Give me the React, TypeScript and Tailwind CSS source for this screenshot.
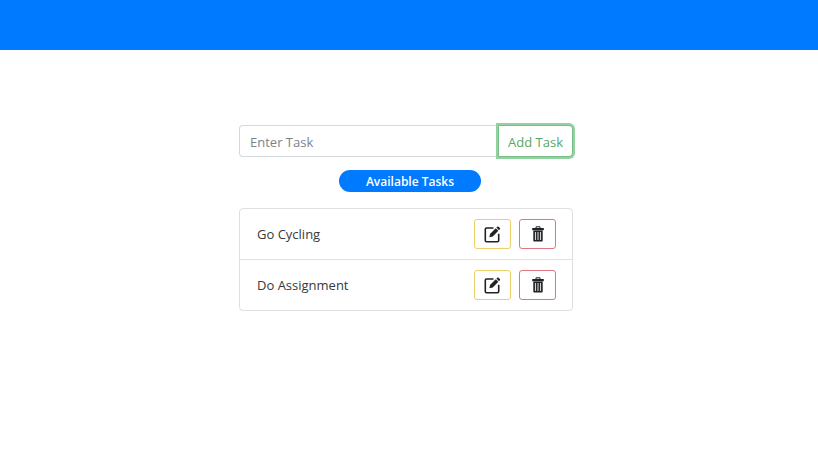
import React, { useState } from "react";

function EditIcon() {
  return (
    <svg viewBox="0 0 17 17" className="h-[17px] w-[17px]" fill="none" aria-hidden="true">
      <path
        d="M9.500 2H2.500C1.700 2 1.300 2.400 1.300 3.200v11.300c0 .8.4 1.200 1.200 1.200h11c.8 0 1.200-.4 1.200-1.200V7.800"
        stroke="#202326"
        strokeWidth="1.600"
      />
      <path d="M5.300 11.300l.9-3.500 5.600-5.600 2.600 2.600-5.600 5.600z" fill="#202326" />
      <path d="M12.400 1.600l.9-.9c.4-.4.8-.4 1.200 0L15.900 2.100c.4.4.4.8 0 1.200l-.9.9z" fill="#202326" />
    </svg>
  );
}

function TrashIcon() {
  return (
    <svg viewBox="0 0 12 16" className="h-4 w-3" fill="none" aria-hidden="true">
      <path d="M4 2V.8h4V2" stroke="#202326" strokeWidth="1" />
      <path d="M.2 2h11.600v2.200H.2z" fill="#202326" />
      <path d="M1.300 5h9.400v9.500c0 .6-.4 1-1 1H2.300c-.6 0-1-.4-1-1z" fill="#202326" />
      <path d="M1.300 4.200h9.400V5H1.300z" fill="#55585a" />
      <path d="M3.500 6v8M6 6v8M8.500 6v8" stroke="#d4d4d4" strokeWidth="1.100" />
    </svg>
  );
}

export default function App() {
  const [tasks, setTasks] = useState(["Go Cycling", "Do Assignment"]);
  const [draft, setDraft] = useState("");

  const addTask = (event: React.FormEvent) => {
    event.preventDefault();
    if (draft.trim()) {
      setTasks([...tasks, draft.trim()]);
      setDraft("");
    }
  };

  const editTask = (index: number) => {
    setDraft(tasks[index]);
    setTasks(tasks.filter((_, i) => i !== index));
  };

  return (
    <div className="min-h-screen bg-white font-['Open_Sans',sans-serif] text-[13px] leading-5 text-[#343a40]">
      <header className="h-[50px] bg-[#007bff]" />
      <main className="mx-auto w-full max-w-[340px] pt-[75px]">
        <form onSubmit={addTask} className="mr-[6px] flex h-8">
          <input
            type="text"
            aria-label="Enter Task"
            placeholder="Enter Task"
            value={draft}
            onChange={(event) => setDraft(event.target.value)}
            className="min-w-0 flex-1 rounded-l border border-r-0 border-[#d5d9dd] px-[10px] pt-[2px] outline-none placeholder:text-[#7b838a]"
          />
          <button
            type="submit"
            className="rounded-r border border-[#76bf87] bg-white px-[9px] pt-[2px] whitespace-nowrap text-[#55a668] ring-2 ring-[#93d1a1]"
          >
            Add Task
          </button>
        </form>
        <div className="mt-[13px] flex justify-center pl-[2px]">
          <h2 className="w-[142px] rounded-full bg-[#007bff] pt-[2px] text-center text-[12px] font-semibold text-white">
            Available Tasks
          </h2>
        </div>
        <ul className="mt-4 mr-[6px] divide-y divide-[#dfdfdf] rounded border border-[#dfdfdf]">
          {tasks.map((task, index) => (
            <li key={index} className="flex items-center gap-2 py-[10px] pr-4 pl-[17px]">
              <span className="flex-1">{task}</span>
              <button
                type="button"
                aria-label={`Edit ${task}`}
                onClick={() => editTask(index)}
                className="flex h-[30px] w-[37px] items-center justify-center rounded-[3px] border border-[#ecd06a]"
              >
                <EditIcon />
              </button>
              <button
                type="button"
                aria-label={`Delete ${task}`}
                onClick={() => setTasks(tasks.filter((_, i) => i !== index))}
                className="flex h-[30px] w-[37px] items-center justify-center rounded-[3px] border border-[#dc7883]"
              >
                <TrashIcon />
              </button>
            </li>
          ))}
        </ul>
      </main>
    </div>
  );
}
